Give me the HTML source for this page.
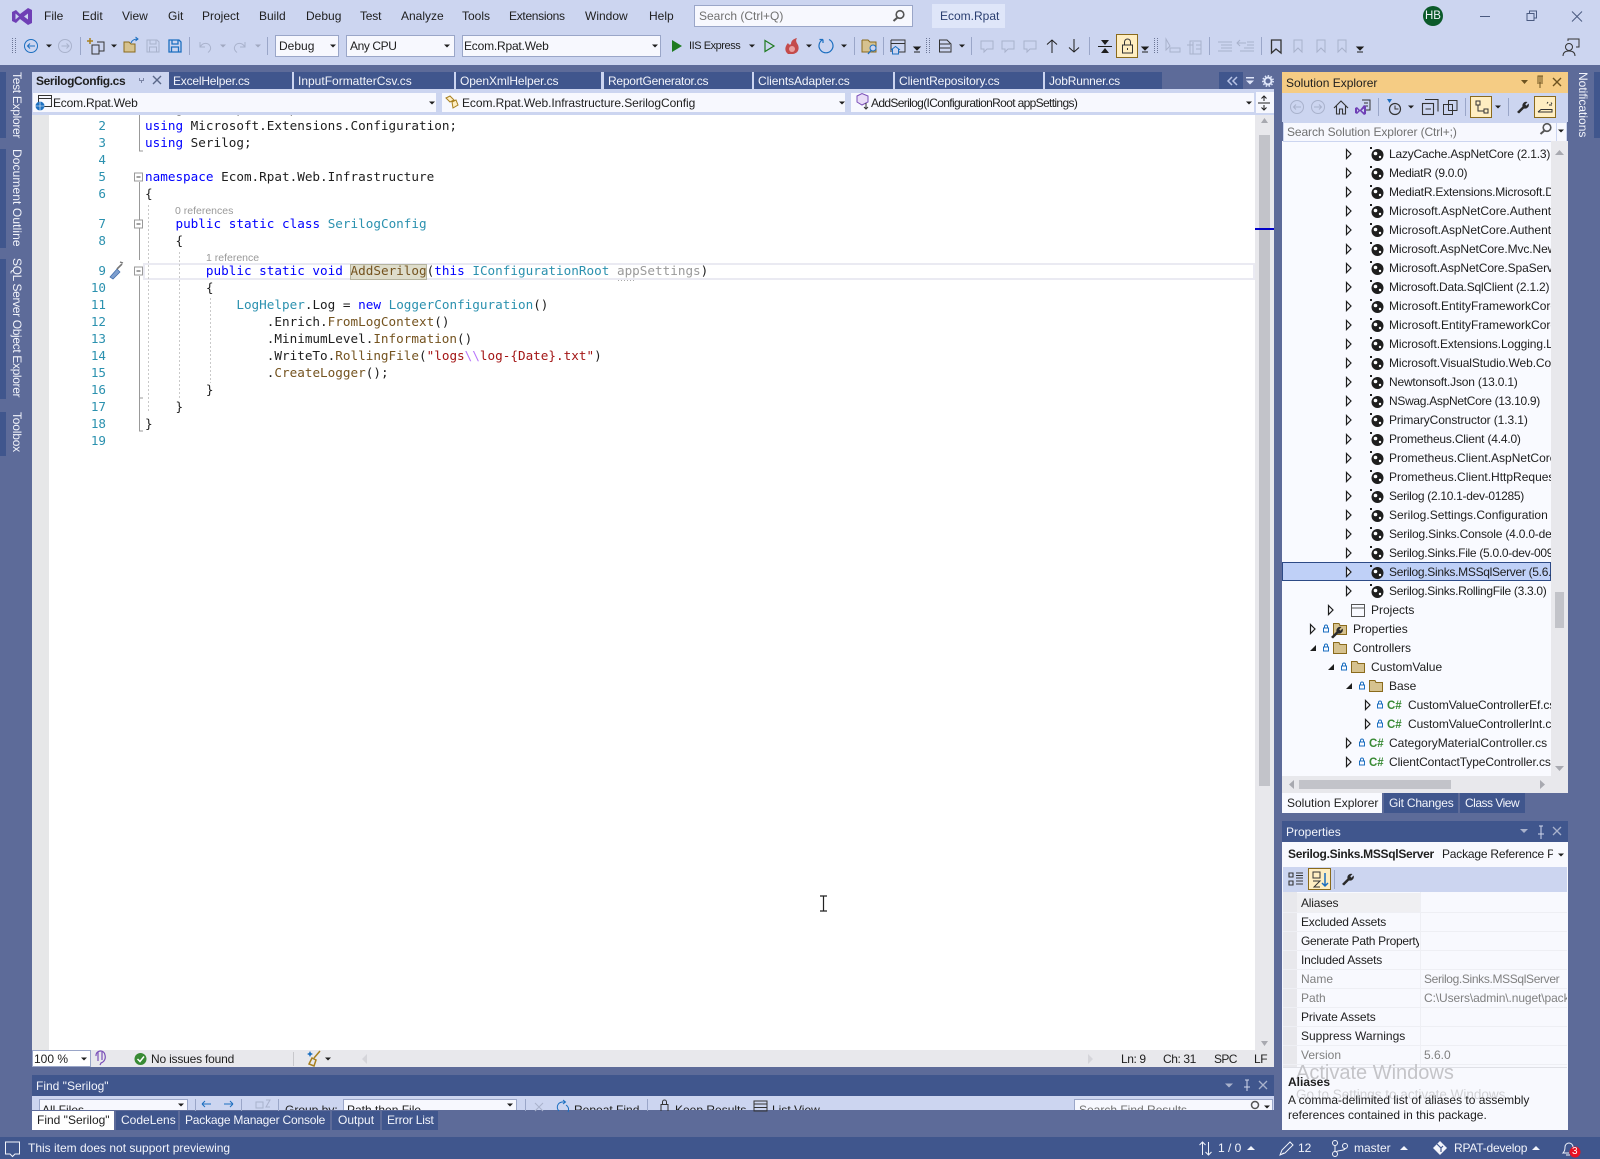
<!DOCTYPE html>
<html><head><meta charset="utf-8"><title>Ecom.Rpat</title>
<style>
html,body{margin:0;padding:0;width:1600px;height:1159px;overflow:hidden;background:#5d6b99}
body{position:relative;font:12px/14px "Liberation Sans",sans-serif;color:#1e1e1e}
div{position:absolute}
span{position:absolute;white-space:pre;line-height:14px}
.w{color:#f2f4fb}.g{color:#717171}.v{writing-mode:vertical-rl;color:#f2f4fb;left:10px}
.l1{letter-spacing:-.1px}.l2{letter-spacing:-.2px}.l3{letter-spacing:-.3px}.l4{letter-spacing:-.4px}
.c{left:145px;white-space:pre;font:12.65px/16px "DejaVu Sans Mono",monospace;color:#1e1e1e}
.n{left:66px;width:40px;text-align:right;font:12.6px/16px "DejaVu Sans Mono",monospace;color:#2b91af}
em{font-style:normal}.k{color:#00f}.t{color:#2b91af}.m{color:#74531f}.s{color:#a31515}.e{color:#b776fb}.p{color:#9a9a9a}
.r{font-size:10.5px;color:#999}
.tab{background:#40568d;top:72px;height:17px}
.cb{background:#f7f8fe;border:1px solid #9aa6c8;box-sizing:border-box}
.ln{background:#eeeff4;left:1283px;width:284px;height:1px}
.cg{color:#388a34;font-weight:bold;font-size:11.5px}
svg{position:absolute;left:0;top:0}
</style></head><body>
<!-- top bars -->
<div style="left:0;top:0;width:1600px;height:65px;background:#ccd5f0"></div>
<span style="left:44px;top:9px">File</span><span style="left:82px;top:9px">Edit</span><span style="left:122px;top:9px">View</span><span style="left:168px;top:9px">Git</span><span style="left:202px;top:9px">Project</span><span style="left:259px;top:9px">Build</span><span style="left:306px;top:9px">Debug</span><span style="left:360px;top:9px" class="l2">Test</span><span style="left:401px;top:9px">Analyze</span><span style="left:462px;top:9px">Tools</span><span class="l3" style="left:509px;top:9px">Extensions</span><span style="left:585px;top:9px">Window</span><span style="left:649px;top:9px">Help</span>
<div class="cb" style="left:694px;top:5px;width:219px;height:22px"></div><span class="g" style="left:699px;top:9px">Search (Ctrl+Q)</span>
<div style="left:932px;top:4px;width:73px;height:24px;background:#dfe6f9"></div><span style="left:940px;top:9px;color:#2a3e70">Ecom.Rpat</span>
<div style="left:1423px;top:6px;width:20px;height:20px;border-radius:50%;background:#0b5a2a"></div><span class="w" style="left:1425px;top:9px;font-size:11.5px">HB</span>
<div class="cb" style="left:275px;top:35px;width:64px;height:22px"></div><span style="left:279px;top:39px">Debug</span>
<div class="cb" style="left:346px;top:35px;width:109px;height:22px"></div><span class="l4" style="left:350px;top:39px">Any CPU</span>
<div class="cb" style="left:462px;top:35px;width:199px;height:22px"></div><span class="l2" style="left:464px;top:39px">Ecom.Rpat.Web</span>
<span style="left:689px;top:39px;font-size:11px;letter-spacing:-.45px">IIS Express</span>
<div style="left:1116px;top:34px;width:22px;height:24px;background:#ffeec2;border:1px solid #8a6a1c;box-sizing:border-box"></div>
<!-- left side tabs -->
<div style="left:0;top:72px;width:6px;height:66px;background:#40568d"></div><div style="left:0;top:149px;width:6px;height:99px;background:#40568d"></div><div style="left:0;top:259px;width:6px;height:140px;background:#40568d"></div><div style="left:0;top:412px;width:6px;height:44px;background:#40568d"></div>
<span class="v l3" style="top:72px">Test Explorer</span><span class="v" style="top:149px;letter-spacing:.1px">Document Outline</span><span class="v" style="top:258px;letter-spacing:-.35px">SQL Server Object Explorer</span><span class="v l2" style="top:412px">Toolbox</span>
<div style="left:1594px;top:72px;width:6px;height:66px;background:#40568d"></div><span class="v" style="left:1576px;top:72px">Notifications</span>
<!-- editor -->
<div style="left:32px;top:113px;width:1223px;height:937px;background:#fff"></div>
<div style="left:32px;top:113px;width:17px;height:937px;background:#e6e7e8"></div>
<div style="left:143px;top:263px;width:1112px;height:17px;border:2px solid #eaeaf2;box-sizing:border-box"></div>
<div style="left:350px;top:264px;width:77px;height:16px;background:#deddcb;border:1px solid #b5b49f;box-sizing:border-box"></div>
<div class="c" style="top:101px">using Ecom.Rpat.Helper;</div>
<div class="n" style="top:118px">2</div><div class="c" style="top:118px"><em class="k">using</em> Microsoft.Extensions.Configuration;</div>
<div class="n" style="top:135px">3</div><div class="c" style="top:135px"><em class="k">using</em> Serilog;</div>
<div class="n" style="top:152px">4</div>
<div class="n" style="top:169px">5</div><div class="c" style="top:169px"><em class="k">namespace</em> Ecom.Rpat.Web.Infrastructure</div>
<div class="n" style="top:186px">6</div><div class="c" style="top:186px">{</div>
<span class="r" style="left:175px;top:204px">0 references</span>
<div class="n" style="top:216px">7</div><div class="c" style="top:216px">    <em class="k">public static class</em> <em class="t">SerilogConfig</em></div>
<div class="n" style="top:233px">8</div><div class="c" style="top:233px">    {</div>
<span class="r" style="left:206px;top:251px">1 reference</span>
<div class="n" style="top:263px">9</div><div class="c" style="top:263px">        <em class="k">public static void</em> <em class="m">AddSerilog</em>(<em class="k">this</em> <em class="t">IConfigurationRoot</em> <em class="p">appSettings</em>)</div>
<div class="n" style="top:280px">10</div><div class="c" style="top:280px">        {</div>
<div class="n" style="top:297px">11</div><div class="c" style="top:297px">            <em class="t">LogHelper</em>.Log = <em class="k">new</em> <em class="t">LoggerConfiguration</em>()</div>
<div class="n" style="top:314px">12</div><div class="c" style="top:314px">                .Enrich.<em class="m">FromLogContext</em>()</div>
<div class="n" style="top:331px">13</div><div class="c" style="top:331px">                .MinimumLevel.<em class="m">Information</em>()</div>
<div class="n" style="top:348px">14</div><div class="c" style="top:348px">                .WriteTo.<em class="m">RollingFile</em>(<em class="s">"logs</em><em class="e">\\</em><em class="s">log-{Date}.txt"</em>)</div>
<div class="n" style="top:365px">15</div><div class="c" style="top:365px">                .<em class="m">CreateLogger</em>();</div>
<div class="n" style="top:382px">16</div><div class="c" style="top:382px">        }</div>
<div class="n" style="top:399px">17</div><div class="c" style="top:399px">    }</div>
<div class="n" style="top:416px">18</div><div class="c" style="top:416px">}</div>
<div class="n" style="top:433px">19</div>
<!-- editor scrollbar and status -->
<div style="left:1255px;top:113px;width:19px;height:937px;background:#e8e8ec"></div>
<div style="left:1259px;top:135px;width:11px;height:651px;background:#c2c3c9"></div>
<div style="left:1255px;top:228px;width:19px;height:2px;background:#0000c8"></div>
<div style="left:32px;top:1050px;width:1242px;height:17px;background:#e8e8ec"></div>
<div style="left:32px;top:1050px;width:59px;height:17px;background:#fff;border:1px solid #9aa6c8;box-sizing:border-box"></div>
<span style="left:34px;top:1052px">100 %</span><span class="l2" style="left:151px;top:1052px">No issues found</span><span class="l4" style="left:1121px;top:1052px">Ln: 9</span><span class="l4" style="left:1163px;top:1052px">Ch: 31</span><span class="l4" style="left:1214px;top:1052px;letter-spacing:-.6px">SPC</span><span class="l4" style="left:1254px;top:1052px">LF</span>
<!-- editor tabs -->
<div style="left:32px;top:72px;width:1242px;height:41px;background:#ccd5f0"></div>
<div style="left:1162px;top:72px;width:112px;height:17px;background:#5d6b99"></div>
<div style="left:32px;top:89px;width:1242px;height:3px;background:#ccd5f0"></div>
<div style="left:32px;top:113px;width:1242px;height:2px;background:#ccd5f0"></div>
<span style="left:36px;top:74px;font-weight:bold;letter-spacing:-.38px">SerilogConfig.cs</span>
<div class="tab" style="left:169px;width:123px"></div><span class="w l2" style="left:173px;top:74px">ExcelHelper.cs</span>
<div class="tab" style="left:294px;width:160px"></div><span class="w" style="left:298px;top:74px">InputFormatterCsv.cs</span>
<div class="tab" style="left:456px;width:145px"></div><span class="w l1" style="left:460px;top:74px">OpenXmlHelper.cs</span>
<div class="tab" style="left:604px;width:148px"></div><span class="w" style="left:608px;top:74px;letter-spacing:-.25px">ReportGenerator.cs</span>
<div class="tab" style="left:754px;width:139px"></div><span class="w l1" style="left:758px;top:74px">ClientsAdapter.cs</span>
<div class="tab" style="left:895px;width:148px"></div><span class="w l1" style="left:899px;top:74px">ClientRepository.cs</span>
<div class="tab" style="left:1045px;width:117px"></div><span class="w l2" style="left:1049px;top:74px">JobRunner.cs</span>
<div class="tab" style="left:1219px;width:24px"></div>
<div class="cb" style="left:32px;top:92px;width:405px;height:21px;border-color:#ccd5f0"></div><span class="l2" style="left:53px;top:96px">Ecom.Rpat.Web</span>
<div class="cb" style="left:441px;top:92px;width:405px;height:21px;border-color:#ccd5f0"></div><span style="left:462px;top:96px;letter-spacing:-.08px">Ecom.Rpat.Web.Infrastructure.SerilogConfig</span>
<div class="cb" style="left:850px;top:92px;width:405px;height:21px;border-color:#ccd5f0"></div><span style="left:871px;top:96px;letter-spacing:-.65px">AddSerilog(IConfigurationRoot appSettings)</span>
<div style="left:1256px;top:92px;width:18px;height:21px;background:#f7f8fe"></div>
<!-- find panel -->
<div style="left:32px;top:1075px;width:1242px;height:21px;background:#40568d"></div><span class="w" style="left:36px;top:1079px">Find "Serilog"</span>
<div style="left:32px;top:1096px;width:1242px;height:15px;background:#ccd5f0"></div>
<div class="cb" style="left:39px;top:1099px;width:149px;height:20px"></div><span style="left:42px;top:1103px">All Files</span>
<span style="left:285px;top:1103px">Group by:</span><div class="cb" style="left:343px;top:1099px;width:174px;height:20px"></div><span style="left:347px;top:1103px">Path then File</span>
<span style="left:574px;top:1103px">Repeat Find</span><span style="left:675px;top:1103px">Keep Results</span><span style="left:772px;top:1103px">List View</span>
<div class="cb" style="left:1074px;top:1099px;width:199px;height:20px"></div><span class="g" style="left:1079px;top:1103px">Search Find Results</span>
<div style="left:0;top:1110px;width:1282px;height:27px;background:#5d6b99"></div>
<div style="left:32px;top:1111px;width:82px;height:19px;background:#fff"></div><span style="left:37px;top:1113px">Find "Serilog"</span>
<div class="tab" style="left:116px;top:1111px;width:62px;height:19px"></div><span class="w" style="left:121px;top:1113px">CodeLens</span>
<div class="tab" style="left:180px;top:1111px;width:150px;height:19px"></div><span class="w l2" style="left:185px;top:1113px">Package Manager Console</span>
<div class="tab" style="left:332px;top:1111px;width:48px;height:19px"></div><span class="w" style="left:338px;top:1113px">Output</span>
<div class="tab" style="left:382px;top:1111px;width:56px;height:19px"></div><span class="w l2" style="left:387px;top:1113px">Error List</span>
<!-- solution explorer -->
<div style="left:1282px;top:72px;width:286px;height:21px;background:#f5cc84"></div><span style="left:1286px;top:76px">Solution Explorer</span>
<div style="left:1282px;top:93px;width:286px;height:29px;background:#ccd5f0"></div>
<div style="left:1470px;top:96px;width:22px;height:22px;background:#ffeec2;border:1px solid #8a6a1c;box-sizing:border-box"></div>
<div style="left:1534px;top:96px;width:22px;height:22px;background:#ffeec2;border:1px solid #8a6a1c;box-sizing:border-box"></div>
<div style="left:1282px;top:141px;width:286px;height:635px;background:#f9faff"></div>
<div class="cb" style="left:1283px;top:122px;width:284px;height:20px;border-color:#ccd5f0"></div><span class="g l1" style="left:1287px;top:125px">Search Solution Explorer (Ctrl+;)</span><div style="left:1556px;top:122px;width:1px;height:20px;background:#ccd5f0"></div>
<div style="left:1282px;top:562px;width:269px;height:19px;background:#bfd0f7;border:1px solid #2d4a86;box-sizing:border-box"></div>
<div style="left:0;top:0;width:1551px;height:776px;overflow:hidden">
<span class="l2" style="left:1389px;top:147px">LazyCache.AspNetCore (2.1.3)</span>
<span class="l3" style="left:1389px;top:166px">MediatR (9.0.0)</span>
<span class="l2" style="left:1389px;top:185px">MediatR.Extensions.Microsoft.DependencyInjection</span>
<span style="left:1389px;top:204px">Microsoft.AspNetCore.Authentication.JwtBearer</span>
<span style="left:1389px;top:223px">Microsoft.AspNetCore.Authentication.OpenIdConnect</span>
<span class="l1" style="left:1389px;top:242px">Microsoft.AspNetCore.Mvc.NewtonsoftJson</span>
<span class="l1" style="left:1389px;top:261px">Microsoft.AspNetCore.SpaServices.Extensions</span>
<span class="l2" style="left:1389px;top:280px">Microsoft.Data.SqlClient (2.1.2)</span>
<span style="left:1389px;top:299px">Microsoft.EntityFrameworkCore.Design</span>
<span style="left:1389px;top:318px">Microsoft.EntityFrameworkCore.SqlServer</span>
<span class="l1" style="left:1389px;top:337px">Microsoft.Extensions.Logging.Log4Net</span>
<span class="l1" style="left:1389px;top:356px">Microsoft.VisualStudio.Web.CodeGeneration</span>
<span class="l2" style="left:1389px;top:375px">Newtonsoft.Json (13.0.1)</span>
<span class="l3" style="left:1389px;top:394px">NSwag.AspNetCore (13.10.9)</span>
<span class="l1" style="left:1389px;top:413px">PrimaryConstructor (1.3.1)</span>
<span class="l2" style="left:1389px;top:432px">Prometheus.Client (4.4.0)</span>
<span style="left:1389px;top:451px">Prometheus.Client.AspNetCore</span>
<span style="left:1389px;top:470px">Prometheus.Client.HttpRequestDurations</span>
<span class="l3" style="left:1389px;top:489px">Serilog (2.10.1-dev-01285)</span>
<span style="left:1389px;top:508px">Serilog.Settings.Configuration</span>
<span class="l2" style="left:1389px;top:527px">Serilog.Sinks.Console (4.0.0-dev-00839)</span>
<span class="l3" style="left:1389px;top:546px">Serilog.Sinks.File (5.0.0-dev-00909)</span>
<span class="l3" style="left:1389px;top:565px">Serilog.Sinks.MSSqlServer (5.6.0)</span>
<span class="l3" style="left:1389px;top:584px">Serilog.Sinks.RollingFile (3.3.0)</span>
<span style="left:1371px;top:603px">Projects</span>
<span style="left:1353px;top:622px">Properties</span>
<span style="left:1353px;top:641px">Controllers</span>
<span style="left:1371px;top:660px">CustomValue</span>
<span style="left:1389px;top:679px">Base</span>
<span class="cg" style="left:1387px;top:699px">C#</span><span class="l1" style="left:1408px;top:698px">CustomValueControllerEf.cs</span>
<span class="cg" style="left:1387px;top:718px">C#</span><span class="l1" style="left:1408px;top:717px">CustomValueControllerInt.cs</span>
<span class="cg" style="left:1369px;top:737px">C#</span><span style="left:1389px;top:736px">CategoryMaterialController.cs</span>
<span class="cg" style="left:1369px;top:756px">C#</span><span class="l1" style="left:1389px;top:755px">ClientContactTypeController.cs</span>
</div>
<div style="left:1551px;top:141px;width:17px;height:635px;background:#e8e8ec"></div>
<div style="left:1555px;top:592px;width:9px;height:36px;background:#c2c3c9"></div>
<div style="left:1282px;top:776px;width:286px;height:17px;background:#e8e8ec"></div>
<div style="left:1299px;top:780px;width:152px;height:9px;background:#c2c3c9"></div>
<div style="left:1282px;top:793px;width:100px;height:20px;background:#f9faff"></div><span style="left:1287px;top:796px">Solution Explorer</span>
<div class="tab" style="left:1384px;top:793px;width:74px;height:20px"></div><span class="w l2" style="left:1389px;top:796px">Git Changes</span>
<div class="tab" style="left:1460px;top:793px;width:65px;height:20px"></div><span class="w" style="left:1465px;top:796px;letter-spacing:-.5px">Class View</span>
<!-- properties -->
<div style="left:1282px;top:821px;width:286px;height:21px;background:#40568d"></div><span class="w" style="left:1286px;top:825px">Properties</span>
<div style="left:1282px;top:842px;width:286px;height:288px;background:#f8f9fe"></div>
<span class="l3" style="left:1288px;top:847px;font-weight:bold">Serilog.Sinks.MSSqlServer</span>
<div style="left:1442px;top:847px;width:111px;height:14px;overflow:hidden"><span class="l2" style="left:0;top:0">Package Reference Properties</span></div>
<div style="left:1283px;top:867px;width:284px;height:25px;background:#ccd5f0"></div>
<div style="left:1308px;top:868px;width:23px;height:22px;background:#ffeec2;border:1px solid #8a6a1c;box-sizing:border-box"></div>
<div style="left:1283px;top:892px;width:14px;height:175px;background:#e8e8ec"></div>
<div style="left:1297px;top:893px;width:123px;height:19px;background:#efeff2"></div>
<div style="left:1420px;top:892px;width:1px;height:175px;background:#eeeff4"></div>
<div class="ln" style="top:912px"></div><div class="ln" style="top:931px"></div><div class="ln" style="top:950px"></div><div class="ln" style="top:969px"></div><div class="ln" style="top:988px"></div><div class="ln" style="top:1007px"></div><div class="ln" style="top:1026px"></div><div class="ln" style="top:1045px"></div><div class="ln" style="top:1064px"></div><div class="ln" style="top:1067px;background:#dfe0e6"></div>
<span class="l2" style="left:1301px;top:896px">Aliases</span><span class="l2" style="left:1301px;top:915px">Excluded Assets</span>
<div style="left:1301px;top:934px;width:118px;height:14px;overflow:hidden"><span class="l3" style="left:0;top:0">Generate Path Property</span></div>
<span class="l2" style="left:1301px;top:953px">Included Assets</span>
<span style="left:1301px;top:972px;color:#808080">Name</span><span style="left:1424px;top:972px;color:#808080;letter-spacing:-.35px">Serilog.Sinks.MSSqlServer</span>
<span style="left:1301px;top:991px;color:#808080">Path</span>
<div style="left:1424px;top:991px;width:143px;height:14px;overflow:hidden"><span class="l1" style="left:0;top:0;color:#808080">C:\Users\admin\.nuget\packages</span></div>
<span class="l1" style="left:1301px;top:1010px">Private Assets</span><span style="left:1301px;top:1029px">Suppress Warnings</span>
<span style="left:1301px;top:1048px;color:#808080">Version</span><span style="left:1424px;top:1048px;color:#808080">5.6.0</span>
<span style="left:1296px;top:1065px;font-size:20px;line-height:16px;color:#c4c4c8">Activate Windows</span>
<span style="left:1296px;top:1088px;font-size:13.5px;color:#d2d2d6">Go to Settings to activate Windows.</span>
<span style="left:1288px;top:1075px;font-weight:bold">Aliases</span>
<span style="left:1288px;top:1093px">A comma-delimited list of aliases to assembly</span>
<span style="left:1288px;top:1108px">references contained in this package.</span>
<!-- status bar -->
<div style="left:0;top:1137px;width:1600px;height:22px;background:#40568d"></div>
<span class="w" style="left:28px;top:1141px">This item does not support previewing</span>
<span class="w" style="left:1218px;top:1141px">1 / 0</span><span class="w" style="left:1298px;top:1141px">12</span><span class="w" style="left:1354px;top:1141px">master</span><span class="w l2" style="left:1454px;top:1141px">RPAT-develop</span>
<!-- icons -->
<svg width="1600" height="1159" viewBox="0 0 1600 1159" fill="none">
<defs>
<g id="d"><path d="M-3-1.5H3L0 1.5Z" fill="#1e1e1e"/></g>
<g id="dg"><path d="M-3-1.5H3L0 1.5Z" fill="#a0a8c0"/></g>
<g id="dd"><path d="M-3-3H3L0 0Z M-3 2H3" fill="#1e1e1e" stroke="#1e1e1e"/></g>
<g id="a"><path d="M-2.5-4.5L2 0-2.5 4.5Z" fill="#f9faff" stroke="#1e1e1e" stroke-width="1.2"/></g>
<g id="x"><path d="M3-3V3H-3Z" fill="#1e1e1e"/></g>
<g id="pk"><circle cx="0.5" cy="1" r="6" fill="#1e1e1e"/><circle cx="-1.5" cy="-0.5" r="1.8" fill="#fff"/><circle cx="3" cy="3" r="1.2" fill="#fff"/><rect x="-7" y="-7" width="2" height="2" fill="#1e1e1e"/></g>
<g id="l"><rect x="-2.5" y="-1" width="5" height="4" stroke="#1c6fc0"/><path d="M-1.5-1V-2.5A1.5 1.5 0 0 1 1.5-2.5V-1" stroke="#1c6fc0"/></g>
<g id="f"><path d="M-6.5-5.5H-1L0-3.5H6.5V5.5H-6.5Z" fill="#d6c28f" stroke="#8a6a1c"/></g>
<g id="wr"><path d="M-6 5L-0.5-0.5A3.8 3.8 0 0 1 4.5-5L2.3-2.8 3.3-1.3 5.6-3.5A3.8 3.8 0 0 1 1 1.5L-4 6.5Z" fill="#2a2a2a"/></g>
<g id="cm"><path d="M-6-5H6V3H0L-3 6V3H-6Z" stroke="#a9b2cc"/></g>
<g id="bm"><path d="M-4-6H4V6L0 2-4 6Z" stroke="#a9b2cc"/></g>
</defs>
<!-- logo -->
<path fill-rule="evenodd" d="M12 12L16 10 20 14 28 8 32 10V23L28 25 20 19 16 23 12 21ZM15.5 13.5V19.5L19 16.5ZM24 16.5L28 19.5V13.5Z" fill="#6f3fb5"/>
<!-- window + search -->
<circle cx="900" cy="14.500" r="3.800" stroke="#555" stroke-width="1.600"/><path d="M897.500 17.500L893.500 21" stroke="#555" stroke-width="2"/>
<path d="M1480 16.500H1490" stroke="#4a5a80"/><path d="M1527 13.500H1534V20.500H1527ZM1529.500 13.500V11H1536.500V18H1534" stroke="#4a5a80"/><path d="M1572 11.500L1582 21.500M1582 11.500L1572 21.500" stroke="#4a5a80"/>
<!-- toolbar 1 -->
<path d="M12.500 38V54M15.500 38V54" stroke="#6c7696" stroke-dasharray="1 1"/>
<circle cx="31" cy="46" r="6.500" stroke="#1c6fc0"/><path d="M35 46H27.500M30 43.500L27.500 46 30 48.500" stroke="#1c6fc0"/>
<use href="#d" x="49" y="46"/>
<circle cx="65" cy="46" r="6.500" stroke="#a9b2cc"/><path d="M61.500 46H69M66.500 43.500L69 46 66.500 48.500" stroke="#a9b2cc"/>
<path d="M80.500 37V55M189.500 37V55M267.500 37V55M854.500 37V55M883.500 37V55M971.500 37V55M1089.500 37V55M1209.500 37V55M1261.500 37V55" stroke="#9aa6c8"/>
<path d="M92 45H99V54H92ZM97 42H104V51H99" stroke="#333"/><path d="M90 38V44M87 41H93" stroke="#a8801f" stroke-width="1.500"/>
<use href="#d" x="114" y="46"/>
<path d="M124 42H129L131 44H135V52H124Z" fill="#d6c28f" stroke="#8a6a1c"/><path d="M131 43C132 40 135 39 138 39M135.500 37L138 39 135.500 41" stroke="#1c6fc0"/>
<path d="M147 40H157L159 42V52H147ZM150 40V44H156V40M149.500 52V47H156.500V52" stroke="#a9b2cc"/>
<path d="M169 40H179L181 42V52H169ZM172 40V44H178V40M171.500 52V47H178.500V52" stroke="#1c6fc0" stroke-width="1.300"/>
<path d="M200 42V47H205M200.500 46.500C203 42 209 42.500 210.500 47 211 49 210 51 208 52.500" stroke="#a9b2cc"/><use href="#dg" x="223" y="46"/>
<path d="M245 42V47H240M244.500 46.500C242 42 236 42.500 234.500 47 234 49 235 51 237 52.500" stroke="#a9b2cc"/><use href="#dg" x="258" y="46"/>
<use href="#d" x="333" y="46"/><use href="#d" x="447" y="46"/><use href="#d" x="655" y="46"/>
<path d="M672 40L682 46 672 52Z" fill="#1e7b20"/>
<use href="#d" x="752" y="46"/>
<path d="M765 40.500L774 46 765 51.500Z" stroke="#1e7b20" stroke-width="1.200"/>
<path d="M788 54C784 51 785 46 788 43 789 45 790 45 791 44 791 41 793 39 797 38 795 41 797 43 798 45 800 50 797 54 792 54Z" fill="#c44b4b"/><circle cx="792" cy="49" r="3" fill="#e8a0a0"/>
<use href="#d" x="809" y="46"/>
<path d="M823 39.500A7 7 0 1 0 829 39.500M823 39.500V43M823 39.500H819.500" stroke="#1c6fc0" stroke-width="1.200"/>
<use href="#d" x="844" y="46"/>
<path d="M862 40H868L870 42H876V46M876 46V52H862V40" fill="#d6c28f" stroke="#8a6a1c"/><circle cx="873" cy="48" r="3" fill="#ccd5f0" stroke="#1c6fc0"/><path d="M871 50.500L868 54" stroke="#1c6fc0" stroke-width="1.300"/>
<path d="M891 40H905V52H899M891 52V40M891 43.500H905" stroke="#333"/><path d="M891 50L895.500 46.500 900 50M892.500 49V54H898.500V49" stroke="#1c6fc0"/>
<use href="#dd" x="917" y="50"/>
<path d="M926.500 38V54M929.500 38V54" stroke="#6c7696" stroke-dasharray="1 1"/>
<path d="M939.500 40H947L951 44V52H939.500ZM939.500 44H950M939.500 48H950" stroke="#333"/>
<use href="#d" x="962" y="46"/>
<use href="#cm" x="987" y="46"/><use href="#cm" x="1008" y="46"/><use href="#cm" x="1030" y="46"/>
<path d="M1052 53V40M1047 44.500L1052 40 1057 44.500M1074 39V52M1069 47.500L1074 52 1079 47.500" stroke="#1e1e1e"/>
<path d="M1098 46.500H1112" stroke="#1e1e1e"/><path d="M1101 40H1109L1105 45ZM1101 53H1109L1105 48Z" fill="#1e1e1e"/>
<rect x="1122.500" y="45" width="10" height="8" stroke="#333"/><path d="M1124.500 45V42A3 3 0 0 1 1130.500 42V45M1127.500 48V50" stroke="#333"/>
<use href="#dd" x="1145" y="50"/>
<path d="M1154.500 38V54M1157.500 38V54" stroke="#6c7696" stroke-dasharray="1 1"/>
<path d="M1166 39V50L1170 46ZM1170 48H1180V52H1170ZM1190 41H1201V54H1190ZM1187 45H1193M1193 42V54M1196 45H1201M1196 49H1201" stroke="#a9b2cc"/>
<path d="M1218 42H1232M1221 45H1232M1221 48H1232M1218 51H1232M1240 40L1237 43 1240 46M1237 43H1246M1247 42H1254M1247 45H1254M1244 48H1254M1240 51H1254" stroke="#a9b2cc"/>
<path d="M1271.500 40H1281V53L1276 49 1271.500 53Z" stroke="#333" stroke-width="1.300"/>
<use href="#bm" x="1298" y="46"/><use href="#bm" x="1321" y="46"/><use href="#bm" x="1342" y="46"/>
<use href="#dd" x="1360" y="50"/>
<circle cx="1569" cy="47" r="3.500" stroke="#333"/><path d="M1563 56C1563 52 1566 51 1569 51 1572 51 1575 52 1575 56M1568 41V39H1579V47H1576" stroke="#333"/>
<!-- tab controls -->
<path d="M142 80.500H147M144.500 80.500V83M142.500 78V80M146.500 78V80" stroke="#7a84a4" transform="translate(-3 0)"/>
<path d="M153 76L161 84M161 76L153 84" stroke="#5a6788" stroke-width="1.400"/>
<path d="M1232 77L1228 81 1232 85M1237 77L1233 81 1237 85" stroke="#b8c4e6" stroke-width="1.500"/>
<path d="M1246 77H1254V78.500H1246ZM1246 80.500H1254L1250 84.500Z" fill="#dfe6f9"/>
<circle cx="1268" cy="81" r="3.500" stroke="#dfe6f9" stroke-width="2"/><circle cx="1268" cy="81" r="5.200" stroke="#dfe6f9" stroke-dasharray="1.500 1.500" stroke-width="1.500"/>
<!-- nav bar icons -->
<rect x="38.500" y="95.500" width="13" height="11" stroke="#333"/><path d="M38.500 98.500H51.500" stroke="#333"/><circle cx="40" cy="106" r="4.500" fill="#1c6fc0"/><path d="M35.500 106H44.500M40 101.500V110.500" stroke="#fff" stroke-width=".6"/>
<path d="M446 98L450 96 454 100 450 102ZM452 102L456 100 458 105 453 108Z" stroke="#a8801f" fill="#ffeec2"/>
<path d="M857 96L862 93.500 868 96V102L862 105 857 102Z" stroke="#7a4fb8" fill="#e8dcf7"/><path d="M866 103V109M864 107L866 109 868 107" stroke="#333"/>
<use href="#d" x="432" y="103"/><use href="#d" x="842" y="103"/><use href="#d" x="1249" y="103"/>
<path d="M1258 103H1270M1264 96V101M1264 105V110M1261.500 98.500L1264 96 1266.500 98.500M1261.500 107.500L1264 110 1266.500 107.500" stroke="#1e1e1e"/>
<path d="M1264.500 118L1261 123H1268ZM1264.500 1046L1261 1041H1268Z" fill="#a8a9b0"/>
<!-- margin guides -->
<path d="M139.500 115V151H143M139.500 182V260M139.500 229V260M139.500 276V398H143M139.500 398V431H143" stroke="#999"/>
<path d="M148.500 205V412M179.500 252V400M210.500 298V383" stroke="#c9c9c9" stroke-dasharray="2 2"/>
<g fill="#fff" stroke="#999"><rect x="134.500" y="173" width="8" height="8"/><rect x="134.500" y="220" width="8" height="8"/><rect x="134.500" y="267" width="8" height="8"/></g>
<path d="M136.500 177H140.500M136.500 224H140.500M136.500 271H140.500" stroke="#444"/>
<path d="M110 277L117 269 120 272 113 279Z" fill="#7d9fcf" stroke="#3d6aa8" stroke-width=".7"/><path d="M117 269L122 264" stroke="#777" stroke-width="1.600"/><path d="M120 262L123 263" stroke="#777" stroke-width="1.300"/>
<path d="M618 280.500H634" stroke="#aaa" stroke-dasharray="1 2"/>
<!-- editor status -->
<use href="#d" x="84" y="1059"/>
<path d="M96 1056A4.500 4.500 0 0 1 105 1055C106 1059 104 1062 101 1063L100 1065M98 1052V1061M102 1052V1060" stroke="#7a4fb8" stroke-width="1.200"/>
<circle cx="140.500" cy="1059" r="6" fill="#388a34"/><path d="M137.500 1059L140 1061.500 144 1056.500" stroke="#fff" stroke-width="1.500"/>
<path d="M293.500 1052V1066" stroke="#c8c8cc"/>
<path d="M309 1064L312 1058 316 1060 314 1066ZM314 1058L320 1051" stroke="#a8801f" stroke-width="1.500"/><path d="M309 1053L310 1051 311 1053 313 1054 311 1055 310 1057 309 1055 307 1054Z" fill="#1c6fc0"/>
<use href="#d" x="328" y="1059"/>
<path d="M367 1054V1064L362 1059ZM1088 1054V1064L1093 1059Z" fill="#d5d5da"/>
<!-- find panel controls -->
<path d="M1225 1083.500H1233L1229 1087.500Z" fill="#a9b2cc"/><path d="M1247 1080V1087M1244 1087H1250M1245 1080H1249M1247 1087V1091" stroke="#cfd6ea"/><path d="M1259 1081L1267 1089M1267 1081L1259 1089" stroke="#a9b2cc" stroke-width="1.300"/>
<use href="#d" x="181" y="1105"/><use href="#d" x="510" y="1105"/>
<path d="M202 1104H211M202 1104L205 1101M202 1104L205 1107M224 1104H233M233 1104L230 1101M233 1104L230 1107" stroke="#1c6fc0"/>
<path d="M195.500 1099V1111M241.500 1099V1111M278.500 1099V1111M525.500 1099V1111M647.500 1099V1111" stroke="#9aa6c8"/>
<path d="M256 1102H263V1108H256ZM266 1100L270 1100 266 1107H270" stroke="#a9b2cc"/>
<path d="M535 1103L543 1111M543 1103L535 1111" stroke="#a9b2cc"/>
<path d="M559 1111C556 1108 557 1103 562 1102L565 1102M563 1100L565.500 1102 563 1104M566 1105C569 1107 569 1110 568 1112" stroke="#1c6fc0"/>
<path d="M661 1111V1104.500H668V1111M662.500 1104.500V1102A2 2 0 0 1 666.500 1102V1104.500" stroke="#333"/>
<path d="M754 1101H767V1111H754ZM754 1104H767M754 1107.500H767" stroke="#333"/>
<circle cx="1255" cy="1105" r="3.500" stroke="#555" stroke-width="1.500"/><use href="#d" x="1267" y="1107"/>
<!-- find tabs end / solution explorer -->
<path d="M1521 80H1528L1524.500 84Z" fill="#6d5320"/>
<path d="M1537.500 76H1543M1540 76V83M1537 83H1543M1540 83V88M1538 76V82M1542 76V82" stroke="#6d5320"/>
<path d="M1553 78L1561 86M1561 78L1553 86" stroke="#6d5320" stroke-width="1.400"/>
<circle cx="1297" cy="107" r="6.500" stroke="#a9b2cc"/><path d="M1301 107H1293.500M1296 104.500L1293.500 107 1296 109.500" stroke="#a9b2cc"/>
<circle cx="1318" cy="107" r="6.500" stroke="#a9b2cc"/><path d="M1314 107H1321.500M1319 104.500L1321.500 107 1319 109.500" stroke="#a9b2cc"/>
<path d="M1334 108L1341 101 1348 108M1336.500 106V114H1339.500V109H1342.500V114H1345.500V106" stroke="#333" stroke-width="1.100"/>
<path d="M1362 100H1370V110H1364M1364 103H1368M1364 106H1368" stroke="#333"/><path fill-rule="evenodd" d="M1355 108L1357 107 1360 110 1364 105 1366 106V114L1364 115 1360 111 1357 114 1355 113ZM1357 109V112L1358.500 110.500ZM1361.500 110.500L1364 112.500V108.500Z" fill="#6f3fb5"/>
<path d="M1378.500 98V116M1465.500 98V116M1508.500 98V116" stroke="#9aa6c8"/>
<circle cx="1395" cy="109" r="5.500" stroke="#333" stroke-width="1.200"/><path d="M1395 105.500V109H1398.500" stroke="#333"/><path d="M1387 99H1392L1389.500 103Z" fill="#1c6fc0"/>
<use href="#d" x="1411" y="107"/>
<rect x="1422.500" y="103.500" width="11" height="11" stroke="#333" stroke-width="1.100"/><path d="M1425 99.500H1438V111.500M1425.500 109H1431" stroke="#333" stroke-width="1.100"/>
<rect x="1443.500" y="104.500" width="9" height="10" stroke="#333"/><rect x="1448.500" y="100.500" width="8.500" height="10" stroke="#333"/>
<path d="M1476 101H1480V105H1476ZM1484 109H1488V113H1484ZM1478 105V111H1484" stroke="#333"/>
<use href="#d" x="1498" y="107"/>
<use href="#wr" x="1523" y="107"/>
<path d="M1538 112H1552V109.500H1541L1538 112M1551 102.500L1552 104M1549 105H1552M1547 103.500L1548 102" stroke="#333"/>
<circle cx="1547" cy="127.500" r="3.800" stroke="#555" stroke-width="1.600"/><path d="M1544.500 130.500L1540.500 134" stroke="#555" stroke-width="2"/><use href="#d" x="1561" y="131"/>
<!-- tree rows -->
<g>
<use href="#a" x="1349" y="154"/><use href="#pk" x="1377" y="154"/><use href="#a" x="1349" y="173"/><use href="#pk" x="1377" y="173"/><use href="#a" x="1349" y="192"/><use href="#pk" x="1377" y="192"/><use href="#a" x="1349" y="211"/><use href="#pk" x="1377" y="211"/><use href="#a" x="1349" y="230"/><use href="#pk" x="1377" y="230"/><use href="#a" x="1349" y="249"/><use href="#pk" x="1377" y="249"/><use href="#a" x="1349" y="268"/><use href="#pk" x="1377" y="268"/><use href="#a" x="1349" y="287"/><use href="#pk" x="1377" y="287"/><use href="#a" x="1349" y="306"/><use href="#pk" x="1377" y="306"/><use href="#a" x="1349" y="325"/><use href="#pk" x="1377" y="325"/><use href="#a" x="1349" y="344"/><use href="#pk" x="1377" y="344"/><use href="#a" x="1349" y="363"/><use href="#pk" x="1377" y="363"/><use href="#a" x="1349" y="382"/><use href="#pk" x="1377" y="382"/><use href="#a" x="1349" y="401"/><use href="#pk" x="1377" y="401"/><use href="#a" x="1349" y="420"/><use href="#pk" x="1377" y="420"/><use href="#a" x="1349" y="439"/><use href="#pk" x="1377" y="439"/><use href="#a" x="1349" y="458"/><use href="#pk" x="1377" y="458"/><use href="#a" x="1349" y="477"/><use href="#pk" x="1377" y="477"/><use href="#a" x="1349" y="496"/><use href="#pk" x="1377" y="496"/><use href="#a" x="1349" y="515"/><use href="#pk" x="1377" y="515"/><use href="#a" x="1349" y="534"/><use href="#pk" x="1377" y="534"/><use href="#a" x="1349" y="553"/><use href="#pk" x="1377" y="553"/><use href="#a" x="1349" y="572"/><use href="#pk" x="1377" y="572"/><use href="#a" x="1349" y="591"/><use href="#pk" x="1377" y="591"/>
<use href="#a" x="1331" y="610"/><path d="M1351.500 604.500H1364.500V616.500H1351.500ZM1351.500 608H1364.500" stroke="#555"/>
<use href="#a" x="1313" y="629"/><use href="#l" x="1326" y="629"/><use href="#f" x="1340" y="629"/><use href="#wr" x="1337" y="632"/>
<use href="#x" x="1313" y="648"/><use href="#l" x="1326" y="648"/><use href="#f" x="1340" y="648"/>
<use href="#x" x="1331" y="667"/><use href="#l" x="1344" y="667"/><use href="#f" x="1358" y="667"/>
<use href="#x" x="1349" y="686"/><use href="#l" x="1362" y="686"/><use href="#f" x="1376" y="686"/>
<use href="#a" x="1368" y="705"/><use href="#l" x="1380" y="705"/><use href="#a" x="1368" y="724"/><use href="#l" x="1380" y="724"/>
<use href="#a" x="1349" y="743"/><use href="#l" x="1362" y="743"/><use href="#a" x="1349" y="762"/><use href="#l" x="1362" y="762"/>
</g>
<path d="M1559.500 150L1555 155H1564ZM1559.500 771L1555 766H1564ZM1294 780V789L1289 784.500ZM1540 780V789L1545 784.500Z" fill="#a8a9b0"/>
<!-- properties icons -->
<path d="M1520 829H1528L1524 833Z" fill="#a9b2cc"/><path d="M1541 826V834M1538 834H1544M1539 826H1543M1541 834V839" stroke="#cfd6ea"/><path d="M1553 827L1561 835M1561 827L1553 835" stroke="#a9b2cc" stroke-width="1.300"/>
<use href="#d" x="1561" y="855"/>
<path d="M1289 873H1293V877H1289ZM1289 881H1293V885H1289ZM1296 873H1303M1296 875.500H1303M1296 878H1303M1296 881H1303M1296 884H1303" stroke="#333" stroke-width="1.100"/>
<path d="M1313 872H1320V878H1313ZM1313 881H1320L1314 887H1320" stroke="#333"/><path d="M1325 873V886M1322 883L1325 886 1328 883" stroke="#1c6fc0" stroke-width="1.500"/>
<path d="M1334.500 870V889" stroke="#9aa6c8"/>
<use href="#wr" x="1348" y="879"/>
<!-- mouse cursor -->
<path d="M820 896H827M823.500 896V911M820 911H827" stroke="#222" stroke-width="1.200"/>
<!-- status bar icons -->
<path d="M5.500 1142H19.500V1154H15L12.500 1156.500 10 1154H5.500Z" stroke="#f2f4fb"/>
<path d="M1202.500 1155V1142M1199.500 1145L1202.500 1142 1205.500 1145M1208.500 1142V1155M1205.500 1152L1208.500 1155 1211.500 1152" stroke="#f2f4fb"/>
<path d="M1247 1150H1255L1251 1146ZM1400 1150H1408L1404 1146ZM1532 1150H1540L1536 1146Z" fill="#f2f4fb"/>
<path d="M1280 1155L1282 1150 1290 1142 1293 1145 1285 1153ZM1280 1155L1284 1153" stroke="#f2f4fb"/>
<circle cx="1335" cy="1143" r="2.500" stroke="#f2f4fb"/><circle cx="1335" cy="1154" r="2.500" stroke="#f2f4fb"/><circle cx="1345" cy="1146" r="2.500" stroke="#f2f4fb"/><path d="M1335 1145.500V1151.500M1345 1148.500C1345 1151 1337 1150 1336 1152" stroke="#f2f4fb"/>
<path d="M1433 1148L1440 1141 1447 1148 1440 1155Z" fill="#f2f4fb"/><path d="M1437 1144L1441 1148V1152M1441 1148L1443 1146" stroke="#40568d" stroke-width="1.200"/>
<path d="M1569 1153H1563C1565 1151 1565 1149 1565 1147A4 4 0 0 1 1573 1147V1150M1566 1155H1570" stroke="#f2f4fb"/>
<circle cx="1575" cy="1152" r="5.500" fill="#e81123"/>
</svg>
<span style="left:1572px;top:1145px;color:#fff;font-size:10px">3</span>
</body></html>
